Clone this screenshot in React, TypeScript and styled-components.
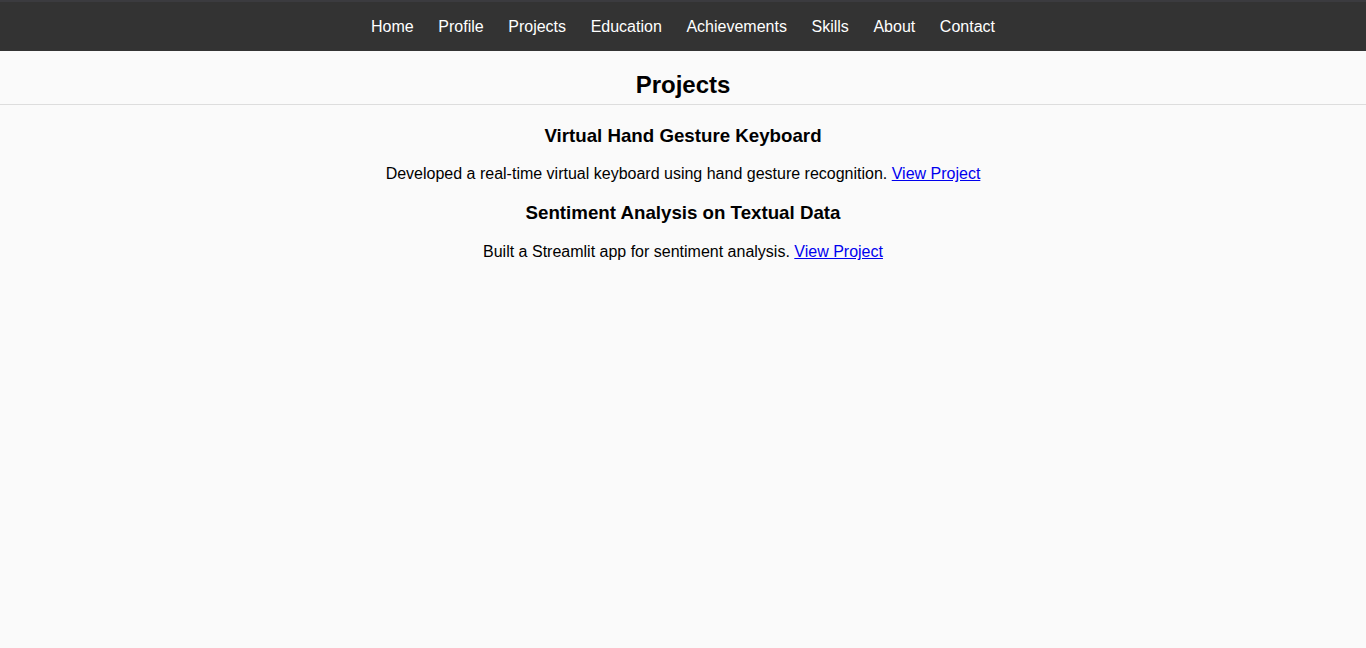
import React from "react";
import styled, { createGlobalStyle } from "styled-components";

const Global = createGlobalStyle`
  html, body { margin: 0; padding: 0; }
  body {
    background: #fafafa;
    font-family: "Liberation Sans", Arial, sans-serif;
    color: #000;
  }
`;

const Nav = styled.nav`
  background: #333;
  border-top: 2px solid #3b3b3f;
  height: 49px;
  display: flex;
  justify-content: center;
  align-items: center;
`;

const NavLink = styled.a`
  color: #fff;
  text-decoration: none;
  font-size: 16px;
  padding: 0 12.3px;
  line-height: 18px;
`;

const Header = styled.header`
  border-bottom: 1px solid #ddd;
  padding: 20px 0 5px;
`;

const Title = styled.h2`
  margin: 0;
  font-size: 24px;
  font-weight: bold;
  text-align: center;
  line-height: 28px;
`;

const Section = styled.section`
  text-align: center;
  padding-top: 1px;
`;

const ProjectTitle = styled.h3`
  font-size: 18.72px;
  font-weight: bold;
  margin: 18.7px 0;
  line-height: 22px;
`;

const Desc = styled.p`
  font-size: 16px;
  margin: 18.7px 0;
  line-height: 18.4px;
`;

const Link = styled.a`
  color: #0000ee;
  text-decoration: underline;
`;

const links = ["Home", "Profile", "Projects", "Education", "Achievements", "Skills", "About", "Contact"];

const projects = [
  {
    title: "Virtual Hand Gesture Keyboard",
    desc: "Developed a real-time virtual keyboard using hand gesture recognition.",
  },
  {
    title: "Sentiment Analysis on Textual Data",
    desc: "Built a Streamlit app for sentiment analysis.",
  },
];

export default function App() {
  return (
    <>
      <Global />
      <Nav>
        {links.map((l) => (
          <NavLink key={l} href="#">
            {l}
          </NavLink>
        ))}
      </Nav>
      <Header>
        <Title>Projects</Title>
      </Header>
      <Section>
        {projects.map((p) => (
          <React.Fragment key={p.title}>
            <ProjectTitle>{p.title}</ProjectTitle>
            <Desc>
              {p.desc} <Link href="#">View Project</Link>
            </Desc>
          </React.Fragment>
        ))}
      </Section>
    </>
  );
}
